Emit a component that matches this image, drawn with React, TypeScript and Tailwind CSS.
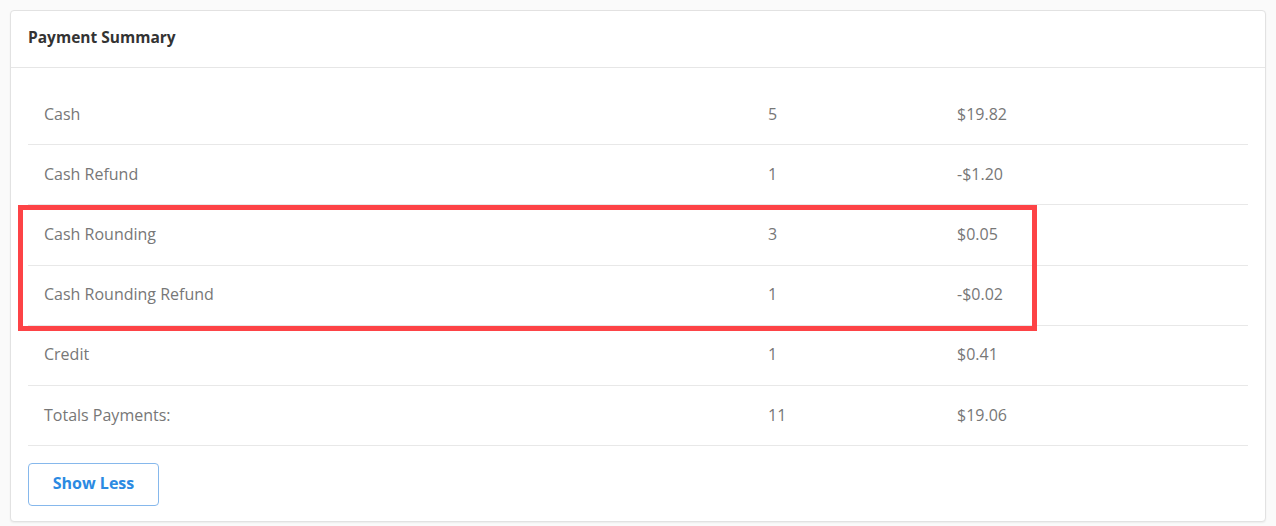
import { useState } from 'react';

type Row = { label: string; count: string; amount: string };

const rows: Row[] = [
  { label: 'Cash', count: '5', amount: '$19.82' },
  { label: 'Cash Refund', count: '1', amount: '-$1.20' },
  { label: 'Cash Rounding', count: '3', amount: '$0.05' },
  { label: 'Cash Rounding Refund', count: '1', amount: '-$0.02' },
  { label: 'Credit', count: '1', amount: '$0.41' },
  { label: 'Totals Payments:', count: '11', amount: '$19.06' },
];

export default function App() {
  const [expanded, setExpanded] = useState(true);

  return (
    <div
      className="relative min-h-[526px] w-[1276px] bg-[#fafafa] p-[10px]"
      style={{ fontFamily: '"Open Sans", "Noto Sans", sans-serif' }}
    >
      <div className="h-[512px] rounded-[4px] border border-[#e2e2e2] bg-white shadow-[0_1px_2px_rgba(0,0,0,0.06)]">
        {/* header */}
        <div className="flex h-[57px] items-center border-b border-[#e6e6e6] px-[17px] pb-[3px]">
          <h2 className="text-[15.5px] font-bold text-[#333]">Payment Summary</h2>
        </div>

        <div className="px-[17px] pt-[17px]">
          {(expanded ? rows : rows.slice(0, 3)).map((row) => (
            <div
              key={row.label}
              className="grid h-[60.2px] grid-cols-[724px_189px_1fr] items-center border-b border-[#e8e8e8] px-4 pb-[2px] text-[16px] text-[#777]"
            >
              <span>{row.label}</span>
              <span>{row.count}</span>
              <span>{row.amount}</span>
            </div>
          ))}

          <button
            onClick={() => setExpanded(!expanded)}
            className="mt-[17px] h-[43px] w-[131px] rounded-[4px] border border-[#86b8ec] pb-[3px] text-[16px] font-bold text-[#2b8ae2]"
          >
            {expanded ? 'Show Less' : 'Show More'}
          </button>
        </div>
      </div>

      {/* highlight annotation */}
      <div className="pointer-events-none absolute left-[18px] top-[205px] h-[126px] w-[1019px] border-[5px] border-[#fd4346]" />
    </div>
  );
}
